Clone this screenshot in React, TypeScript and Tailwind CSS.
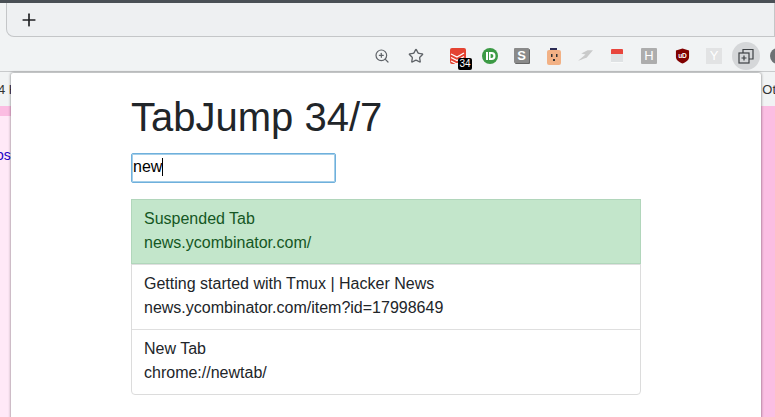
import { Plus, Star, ZoomIn } from "lucide-react";

const results = [
  { title: "Suspended Tab", url: "news.ycombinator.com/", active: true },
  { title: "Getting started with Tmux | Hacker News", url: "news.ycombinator.com/item?id=17998649", active: false },
  { title: "New Tab", url: "chrome://newtab/", active: false },
];

function Extensions() {
  return (
    <div className="flex items-center">
      {/* todoist */}
      <div className="relative ml-[11px] w-[16px] h-[16px] rounded-[2px] bg-[#e44332]">
        <svg viewBox="0 0 16 16" className="w-[16px] h-[16px]">
          <path d="M1 6l6 3 7-4M1 9.5l6 3 7-4M1 13l6 3 5-3" stroke="#fff" strokeWidth="1.3" fill="none" />
        </svg>
        <span className="absolute left-[8px] top-[10px] w-[14px] h-[12px] rounded-[2px] bg-black text-white text-[10px] leading-[12px] text-center">34</span>
      </div>
      {/* pushbullet */}
      <svg viewBox="0 0 16 16" className="ml-[16px] w-[16px] h-[16px]">
        <circle cx="8" cy="8" r="8" fill="#3c9a45" />
        <rect x="4" y="4" width="2" height="8" fill="#fff" />
        <path d="M7 4h2.5a4 4 0 0 1 0 8H7z" fill="#fff" />
        <path d="M8.6 6h.8a2 2 0 0 1 0 4h-.8z" fill="#3c9a45" />
      </svg>
      {/* s box */}
      <div className="ml-[16px] w-[15px] h-[15px] rounded-[1px] bg-[#8a8a8a] shadow-[1px_1px_0_#666] text-white text-[13px] font-bold leading-[15px] text-center">
        S
      </div>
      {/* outlet face */}
      <svg viewBox="0 0 16 18" className="ml-[17px] w-[16px] h-[18px]">
        <rect x="1" y="3" width="14" height="15" rx="2" fill="#f2b185" />
        <rect x="4" y="1" width="7" height="2" fill="#2c2c55" />
        <rect x="5" y="7" width="1.5" height="3" fill="#333" />
        <rect x="10" y="7" width="1.5" height="3" fill="#333" />
        <rect x="7" y="12" width="2" height="2" fill="#333" />
      </svg>
      {/* swoosh */}
      <svg viewBox="0 0 16 12" className="ml-[15px] w-[17px] h-[13px]">
        <path d="M1 11l7-6-4-1 6-3h5l-6 7-3 1-2 1z" fill="#c9caca" />
      </svg>
      {/* calendar */}
      <div className="ml-[17px] flex flex-col w-[12px] h-[14px]">
        <div className="h-[5px] bg-[#e8453c] rounded-t-[1px]" />
        <div className="h-[8px] bg-[#dfe2e4]" />
        <div className="h-[1px] bg-[#f9fafa]" />
      </div>
      <div className="ml-[18px] w-[16px] h-[16px] rounded-[1px] bg-[#adadad] text-white text-[13px] leading-[16px] text-center">H</div>
      {/* ublock */}
      <svg viewBox="0 0 16 16" className="ml-[18px] w-[15px] h-[16px]">
        <path d="M8 0l7 2v7c0 3-3 5.500-7 7-4-1.500-7-4-7-7V2z" fill="#800000" />
        <text x="8" y="10" textAnchor="middle" fontSize="7" fontWeight="700" fill="#fff">uD</text>
      </svg>
      <div className="ml-[16px] w-[16px] h-[16px] bg-[#e2e3e4] text-white text-[13px] leading-[16px] text-center">Y</div>
      {/* tab manager button */}
      <div className="ml-[10px] w-[28px] h-[28px] rounded-full bg-[#d5d7d9] flex items-center justify-center">
        <svg viewBox="0 0 16 16" className="w-[16px] h-[16px]" fill="none" stroke="#3c4043" strokeWidth="1.2">
          <rect x="1" y="5" width="10" height="10" />
          <path d="M5 5V1.500h10V11h-4" />
          <path d="M6 7.500v5M3.500 10h5" />
        </svg>
      </div>
      <div className="ml-[10px] w-[16px] h-[16px] rounded-full bg-[#6e7174] shrink-0" />
    </div>
  );
}

export default function App() {
  return (
    <div className="relative w-[775px] h-[417px] overflow-hidden bg-[#ffe9f7] font-['Liberation_Sans',Arial,sans-serif] text-[#212529]">
      <div className="h-[3px] bg-[#4a5056]" />

      {/* tab strip */}
      <div className="h-[34px] bg-[#f1f3f4] overflow-hidden">
        <div className="h-[34px] ml-[6px] bg-[#eef0f2] flex items-center pl-[12px] border border-[#c4c6c8] border-t-0 rounded-bl-[8px]">
          <Plus size={20} strokeWidth={2} className="text-[#202124]" />
        </div>
      </div>

      {/* toolbar */}
      <div className="h-[35px] pt-[3px] bg-[#f1f3f4] border-b border-[#c8cacc] flex items-center justify-end overflow-hidden">
        <ZoomIn size={16} strokeWidth={1.8} className="text-[#5f6368] mr-[18px] shrink-0" />
        <Star size={16} strokeWidth={2} className="text-[#5f6368] mr-[15px] shrink-0" />
        <div className="shrink-0 mr-[-11px]">
          <Extensions />
        </div>
      </div>

      {/* bookmarks bar */}
      <div className="h-[34px] bg-[#f1f3f4] flex items-center justify-between text-[13px] leading-none text-[#333]">
        <span className="ml-[-2px]">4 H</span>
        <span className="mr-[-1px]">Ot</span>
      </div>

      {/* page behind */}
      <div className="h-[10px] bg-[#fbbde2]" />
      <div className="flex h-[301px]">
        <div className="text-[14px] leading-none mt-[32px] ml-[-4px] text-[#2200c8]">os</div>
        <div className="ml-auto w-[14px] bg-[#fbbde2]" />
      </div>

      {/* extension popup */}
      <div className="absolute left-[11px] top-[73px] w-[750px] h-[360px] bg-white rounded-[2px] shadow-[0_0_3px_rgba(0,0,0,0.55)] pl-[120px] pt-[20px]">
        <h1 className="text-[40px] leading-[48px] font-normal">TabJump 34/7</h1>
        <div className="mt-[12px] w-[205px] h-[30px] rounded-[2px] border border-[#6fb0dc] shadow-[inset_0_0_0_1px_#a5cfe9] flex items-center pl-[1px] pb-[2px] text-[16px] text-black">
          new
          <span className="w-px h-[18px] bg-black" />
        </div>
        <div className="mt-[16px] w-[510px] rounded-b-[4px] border border-[#dcdcdc]">
          {results.map((r) => (
            <div
              key={r.url}
              className={
                (r.active
                  ? "-mx-px -mt-px border border-[#b1d6bb] bg-[#c3e6cb] text-[#155724] "
                  : "border-t border-[#dfdfdf] text-[#212529] ") +
                "px-[12px] pt-[7px] text-[16px] leading-[24px] h-[65px]"
              }
            >
              <div>{r.title}</div>
              <div>{r.url}</div>
            </div>
          ))}
        </div>
      </div>
    </div>
  );
}
